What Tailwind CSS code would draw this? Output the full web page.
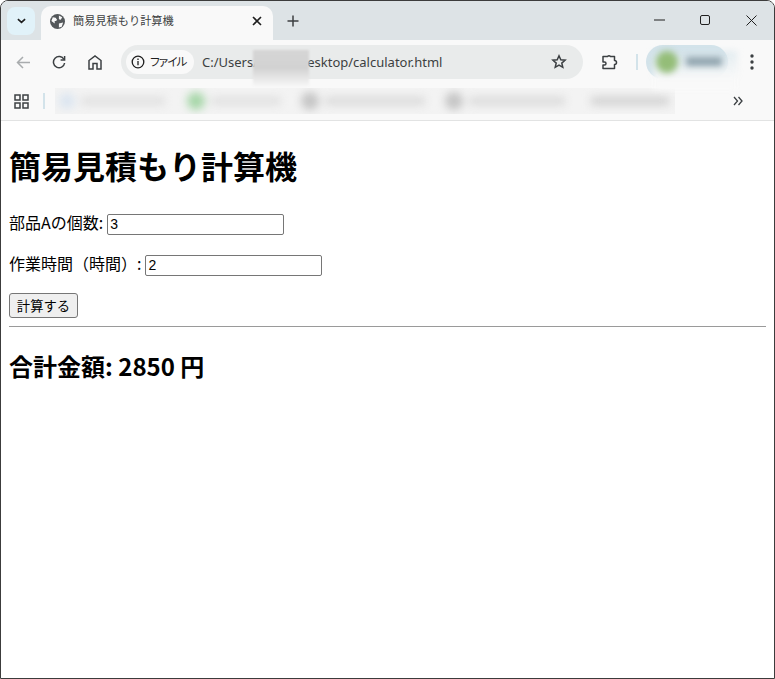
<!DOCTYPE html>
<html lang="ja">
<head>
<meta charset="UTF-8" />
<title>簡易見積もり計算機</title>
<script src="https://cdn.jsdelivr.net/npm/@tailwindcss/browser@4"></script>
</head>
<body class="bg-white">
<div class="w-[775px] h-[679px] overflow-hidden flex flex-col border border-[#3c3c3c] rounded-t-lg font-['Noto_Sans_CJK_JP','Liberation_Sans',sans-serif] text-black">

  <!-- tab strip -->
  <div class="h-[39px] shrink-0 bg-[#dde3e6] flex items-end pl-[6px] relative">
    <div class="w-[28px] h-[28px] mb-[5px] rounded-lg bg-[#e1f2f9] flex items-center justify-center">
      <svg width="9" height="6" viewBox="0 0 10 6" fill="none" stroke="#1f1f1f" stroke-width="1.8"><path d="M1 1l4 3.6L9 1"/></svg>
    </div>
    <div class="w-[232px] h-[34px] ml-[6px] bg-[#f9f9f9] rounded-t-[10px] flex items-center pl-[9px] pr-[11px] pb-[4px]">
      <svg width="15" height="15" viewBox="0 0 16 16"><circle cx="8" cy="8" r="8" fill="#54585b"/><path d="M3 3.500l3 .5 1.500 2-1 1.500-1.500 0 0 2.500-3.500-2.500zM9.500 1.500l3.500 2-1.500 2.500-2-.5zM9.500 10l4.500-1-1.500 4.500-3 1z" fill="#f9f9f9"/></svg>
      <span class="ml-[8px] text-[11.200px] text-[#3c3f41] flex-1 leading-none whitespace-nowrap">簡易見積もり計算機</span>
      <svg width="10" height="10" viewBox="0 0 10 10" stroke="#1f1f1f" stroke-width="1.600"><path d="M1 1l8 8M9 1l-8 8"/></svg>
    </div>
    <svg class="ml-[14px] mb-[13px]" width="12" height="12" viewBox="0 0 12 12" stroke="#3c3f41" stroke-width="1.500"><path d="M6 0.500v11M0.500 6h11"/></svg>
    <div class="ml-auto flex items-center h-full pb-[1px]">
      <div class="w-[46px] flex justify-center"><svg width="11" height="2" viewBox="0 0 11 2" stroke="#1f1f1f"><path d="M0 1h11"/></svg></div>
      <div class="w-[46px] flex justify-center"><div class="w-[10px] h-[10px] border border-[#1f1f1f] rounded-[2px]"></div></div>
      <div class="w-[46px] flex justify-center"><svg width="11" height="11" viewBox="0 0 11 11" stroke="#1f1f1f"><path d="M.5.5l10 10M10.500.5l-10 10"/></svg></div>
    </div>
  </div>

  <!-- toolbar -->
  <div class="h-[44px] shrink-0 bg-[#f9f9f9] flex items-center pl-[15px] relative">
    <svg width="15" height="13" viewBox="0 0 15 13" fill="none" stroke="#a9acae" stroke-width="1.500"><path d="M14 6.500H2M7 1L1.500 6.500 7 12"/></svg>
    <svg class="ml-[21px]" width="14" height="14" viewBox="0 0 14 14" fill="none" stroke="#3c4043" stroke-width="1.500"><path d="M12 4.500A5.600 5.600 0 1 0 12.600 8"/><path d="M12.600 1v4h-4"/></svg>
    <svg class="ml-[22px]" width="14" height="15" viewBox="0 0 14 15" fill="none" stroke="#3c4043" stroke-width="1.500"><path d="M1 14V5.500L7 1l6 4.500V14H9V8.500H5V14z"/></svg>
    <div class="ml-[19px] w-[462px] h-[34px] rounded-full bg-[#e9ebeb] flex items-center pl-[5px]">
      <div class="h-[24px] w-[68px] shrink-0 rounded-full bg-[#f9f9f9] flex items-center pl-[5px]">
        <svg width="14" height="14" viewBox="0 0 14 14" fill="none" stroke="#1f1f1f" stroke-width="1.300"><circle cx="7" cy="7" r="5.800"/><path d="M7 6v4.200M7 3.500v1.500"/></svg>
        <span class="ml-[5px] text-[11.500px] text-[#1f1f1f] leading-none whitespace-nowrap tracking-[-0.8px] [font-feature-settings:'palt']">ファイル</span>
      </div>
      <span class="ml-[8px] text-[13px] text-[#3c3f41] font-['Noto_Sans',sans-serif] leading-none whitespace-nowrap">C:/Users/<span class="text-transparent">name</span>/Desktop/calculator.html</span>
      <svg class="ml-auto mr-[16px] shrink-0" width="16" height="16" viewBox="0 0 16 16" fill="none" stroke="#3c4043" stroke-width="1.500"><path d="M8 1.800l1.800 4 4.300.4-3.300 2.900 1 4.200L8 11.100l-3.800 2.200 1-4.200-3.300-2.900 4.300-.4z"/></svg>
    </div>
    <svg class="ml-[18px]" width="17" height="17" viewBox="0 0 17 17" fill="none" stroke="#3c4043" stroke-width="1.500"><path d="M2 2.500h4.500a2 2 0 0 1 3 0h4v4a1.800 1.800 0 0 1 0 4v4H2v-3.500h1.500a1.500 1.500 0 0 0 0-3H2z" stroke-linejoin="round"/></svg>
    <div class="ml-[18px] w-[2px] h-[16px] bg-[#d3e3ea]"></div>
    <div class="ml-[8px] w-[82px] h-[34px] rounded-full bg-[#d3e3ea]"></div>
    <svg class="ml-[22px]" width="4" height="16" viewBox="0 0 4 16" fill="#3c4043"><circle cx="2" cy="2" r="1.700"/><circle cx="2" cy="8" r="1.700"/><circle cx="2" cy="14" r="1.700"/></svg>
    <!-- blur patches covering the username and the profile chip -->
    <div class="absolute left-[252px] top-[10px] w-[56px] h-[36px] bg-linear-to-b from-[#d6d6d6] via-[#d2d2d2] to-[#f6f6f6] blur-[1px]"></div>
    <div class="absolute left-[652px] top-[11px] w-[84px] h-[40px] bg-linear-to-b from-[#d3e3ea]/60 to-[#f9f9f9] to-70% blur-[3px]"></div>
    <div class="absolute left-[655px] top-[11px] w-[22px] h-[22px] rounded-full bg-[#94bd78] blur-[3px]"></div>
    <div class="absolute left-[685px] top-[17px] w-[36px] h-[9px] bg-[#8fa3ad] blur-[3px]"></div>
  </div>

  <!-- bookmarks bar -->
  <div class="h-[37px] shrink-0 bg-[#f9f9f9] border-b border-[#e2e3e3] flex items-center pl-[13px] pb-[2px]">
    <svg width="15" height="15" viewBox="0 0 15 15" fill="none" stroke="#3c4043" stroke-width="1.500"><rect x="1" y="1" width="5" height="5"/><rect x="9" y="1" width="5" height="5"/><rect x="1" y="9" width="5" height="5"/><rect x="9" y="9" width="5" height="5"/></svg>
    <div class="ml-[14px] w-[2px] h-[16px] bg-[#d3e3ea]"></div>
    <div class="ml-[10px] w-[620px] h-[26px] bg-[#f3f3f3] flex items-center overflow-hidden">
      <div class="flex items-center gap-[6px] blur-[4px]">
        <div class="w-[16px] h-[16px] rounded-full bg-[#dbe5f0] ml-[4px]"></div>
        <div class="w-[84px] h-[8px] bg-[#e0e0e0]"></div>
        <div class="ml-[16px] w-[18px] h-[18px] rounded-full bg-[#a5d6a7]"></div>
        <div class="w-[70px] h-[8px] bg-[#e0e0e0]"></div>
        <div class="ml-[14px] w-[18px] h-[18px] rounded-full bg-[#c4c4c4]"></div>
        <div class="w-[100px] h-[8px] bg-[#dadada]"></div>
        <div class="ml-[14px] w-[18px] h-[18px] rounded-full bg-[#c4c4c4]"></div>
        <div class="w-[96px] h-[8px] bg-[#dadada]"></div>
        <div class="ml-[20px] w-[78px] h-[8px] bg-[#d0d0d0]"></div>
      </div>
    </div>
    <svg class="ml-auto mr-[31px]" width="10" height="10" viewBox="0 0 10 10" fill="none" stroke="#3c4043" stroke-width="1.300"><path d="M1 1l3.500 4L1 9M5.500 1L9 5 5.500 9"/></svg>
  </div>

  <!-- page -->
  <div class="flex-1 bg-white px-[8px]">
    <h1 class="text-[32px] font-bold mt-[21px] leading-[46px]">簡易見積もり計算機</h1>
    <div class="mt-[24px] flex items-center h-[24px] text-[16px]">
      <label class="pb-[5px]">部品Aの個数:</label>
      <input type="text" value="3" class="ml-[4px] w-[177px] h-[21px] border border-[#767676] rounded-[2px] px-[2px] text-[14px] font-['Liberation_Sans',sans-serif] text-black" />
    </div>
    <div class="mt-[17px] flex items-center h-[24px] text-[16px]">
      <label class="pb-[5px]">作業時間（時間）:</label>
      <input type="text" value="2" class="ml-[4px] w-[177px] h-[21px] border border-[#767676] rounded-[2px] px-[2px] text-[14px] font-['Liberation_Sans',sans-serif] text-black" />
    </div>
    <button class="mt-[16px] block w-[69px] h-[25px] bg-[#efefef] border border-[#767676] rounded-[3px] text-[13.333px] leading-none">計算する</button>
    <hr class="mt-[8px] border-t border-b-0 border-[#9a9a9a]" />
    <h2 class="mt-[21px] text-[24px] font-bold leading-[35px]">合計金額: 2850 円</h2>
  </div>
</div>
</body>
</html>
